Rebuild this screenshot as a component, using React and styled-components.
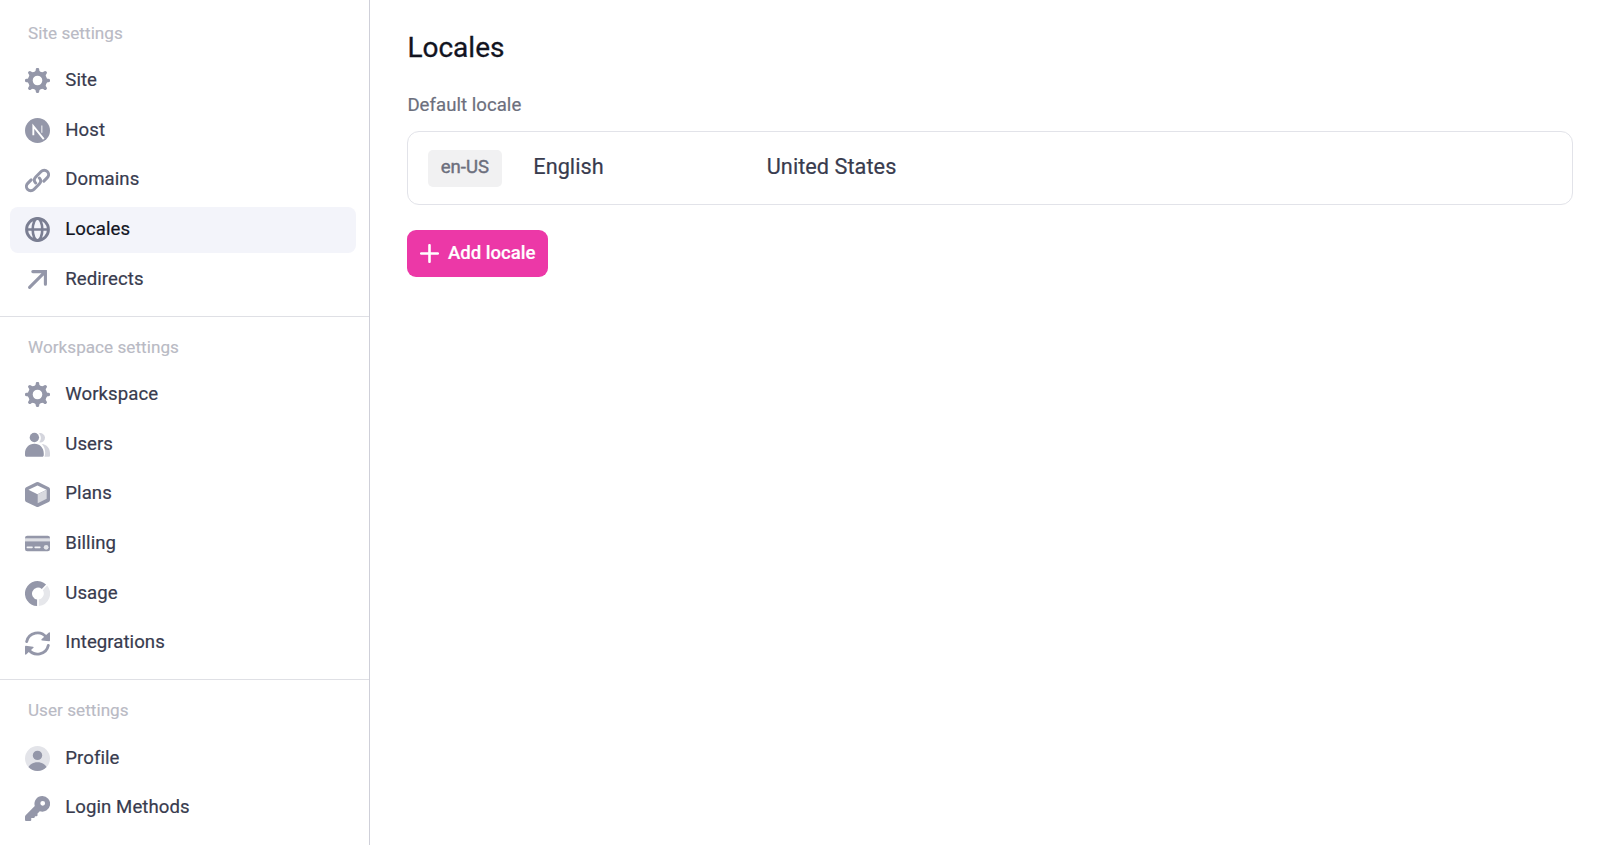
import React from "react";
import styled, { createGlobalStyle } from "styled-components";

const GlobalStyle = createGlobalStyle`
  *, *::before, *::after { box-sizing: border-box; }
  html, body, #root { height: 100%; }
  body {
    margin: 0;
    overflow: hidden;
    background: #fff;
    color: #383b4e;
    font-family: Roboto, "Liberation Sans", sans-serif;
    -webkit-font-smoothing: antialiased;
  }
`;

const Layout = styled.div`
  display: flex;
  height: 845px;
`;

const Sidebar = styled.nav`
  display: flex;
  flex-direction: column;
  flex: 0 0 370px;
  padding-top: 2.7px;
  border-right: 1px solid #cfd0d9;
  overflow: hidden;
`;

const Section = styled.section`
  flex: none;
  padding: 0 13.5px 13.3px 9.5px;

  & + & {
    border-top: 1px solid #dfe0e5;
  }
`;

const SectionLabel = styled.h2`
  margin: 0;
  height: 55px;
  padding: 20px 0 0 18.5px;
  font-size: 17.1px;
  font-weight: 400;
  line-height: 21px;
  letter-spacing: 0.04px;
  color: #b9bac4;
  -webkit-text-stroke: 0.15px currentColor;
`;

const NavList = styled.ul`
  display: flex;
  flex-direction: column;
  gap: 3.68px;
  margin: 0;
  padding: 0;
  list-style: none;
`;

const NavItem = styled.li`
  display: flex;
  align-items: center;
  gap: 15.3px;
  height: 46px;
  padding: 0 15.5px;
  border-radius: 8px;
  font-size: 18.6px;
  line-height: 24px;
  letter-spacing: 0.06px;
  color: ${(p) => (p.$active ? "#12141f" : "#383b4e")};
  background: ${(p) => (p.$active ? "#f3f4fa" : "transparent")};

  svg {
    flex: none;
    color: ${(p) => (p.$active ? "#7a7e92" : "#9497a9")};
  }
`;

const NavText = styled.span`
  padding-bottom: 1.4px;
  white-space: nowrap;
  -webkit-text-stroke: 0.2px currentColor;
`;

const Main = styled.main`
  display: flex;
  flex: 1;
  flex-direction: column;
  align-items: flex-start;
  padding: 31px 27px 0 37.4px;
`;

const Title = styled.h1`
  margin: 0;
  font-size: 28px;
  font-weight: 400;
  line-height: 33px;
  color: #12141f;
  -webkit-text-stroke: 0.3px currentColor;
`;

const FieldLabel = styled.div`
  margin: 29px 0 14px;
  font-size: 18.6px;
  line-height: 24px;
  letter-spacing: 0.03px;
  color: #6c6f7d;
  -webkit-text-stroke: 0.2px currentColor;
`;

const LocaleCard = styled.div`
  display: flex;
  align-items: center;
  width: 100%;
  height: 74px;
  padding: 0 19.2px;
  border: 1px solid #e2e3e9;
  border-radius: 12px;
`;

const LocaleCode = styled.span`
  display: flex;
  align-items: center;
  justify-content: center;
  width: 74.5px;
  height: 37px;
  margin-right: 31.2px;
  padding-bottom: 2px;
  border-radius: 5px;
  background: #f1f1f2;
  font-size: 18.6px;
  color: #6c6f7d;
  -webkit-text-stroke: 0.4px currentColor;
`;

const LocaleText = styled.span`
  width: ${(p) => p.$width || "auto"};
  padding-bottom: 2px;
  font-size: 21.7px;
  line-height: 28px;
  letter-spacing: 0.04px;
  color: #383b4e;
  -webkit-text-stroke: 0.2px currentColor;
`;

const AddButton = styled.button`
  display: flex;
  align-items: center;
  gap: 9px;
  height: 47px;
  margin-top: 25px;
  padding: 0 12.5px;
  border: 0;
  border-radius: 9px;
  background: #ec38a7;
  color: #fff;
  font: 500 18.6px/24px Roboto, sans-serif;
`;

const ButtonLabel = styled.span`
  padding-bottom: 2px;
  -webkit-text-stroke: 0.2px currentColor;
`;

const Icon = ({ children }) => (
  <svg width="25" height="25" viewBox="0 0 24 24" fill="currentColor" aria-hidden="true">
    {children}
  </svg>
);

const GearIcon = () => (
  <Icon>
    <path
      fillRule="evenodd"
      d="M12 3a9 9 0 1 0 0 18a9 9 0 0 0 0-18zM12 7.400a4.600 4.600 0 1 1 0 9.200a4.600 4.600 0 0 1 0-9.200z"
    />
    {[0, 45, 90, 135, 180, 225, 270, 315].map((a) => (
      <path
        key={a}
        transform={`rotate(${a} 12 12)`}
        d="M8.300 4C9.900 3.500 10.300 2.700 10.300 1.600a1.700 1.700 0 0 1 3.400 0C13.700 2.700 14.100 3.500 15.700 4L14 6h-4z"
      />
    ))}
  </Icon>
);

const HostIcon = () => (
  <Icon>
    <circle cx="12" cy="12" r="12" />
    <path d="M8 16.600V7.800L18 20.300" fill="none" stroke="#fff" strokeWidth="1.800" />
    <path d="M16.100 7.200v7" stroke="#fff" strokeOpacity="0.6" strokeWidth="1.500" />
  </Icon>
);

const LinkIcon = () => (
  <Icon>
    <g fill="none" stroke="currentColor" strokeWidth="2.900" strokeLinecap="round">
      <path d="M10.200 14.400c-1.900-1.900-1.700-4 .1-5.800l5.200-5.200a4.150 4.150 0 0 1 5.900 5.900l-3.300 3.300" />
      <path d="M13.800 9.600c1.900 1.900 1.700 4-.1 5.800l-5.200 5.200a4.150 4.150 0 0 1-5.900-5.900l3.300-3.300" />
    </g>
  </Icon>
);

const GlobeIcon = () => (
  <Icon>
    <g fill="none" stroke="currentColor" strokeWidth="2.800">
      <circle cx="12" cy="12" r="10.500" />
      <ellipse cx="12" cy="12" rx="4.600" ry="10.500" strokeWidth="2.500" />
      <path d="M1.300 12h21.400" strokeWidth="2.400" />
    </g>
  </Icon>
);

const ArrowIcon = () => (
  <Icon>
    <path
      d="M7.500 4.400H19.600V16.500M19 5L4.400 19.600"
      fill="none"
      stroke="currentColor"
      strokeWidth="3"
      strokeLinecap="round"
      strokeLinejoin="miter"
    />
  </Icon>
);

const UsersIcon = () => (
  <Icon>
    <path
      opacity="0.4"
      d="M13.200 1.300a4.500 4.500 0 1 1 .4 8.600c2.300-2.500 2.200-6-.4-8.600zM16.200 11.400c4.700.6 7.800 4 7.800 9v2.300a1 1 0 0 1-1 1h-4.200c1.200-4.500.5-9-2.600-12.300z"
    />
    <circle cx="9" cy="5.300" r="4.500" />
    <path d="M9 11.200c5.300 0 9 3.900 9 9.200v1.800c0 .8-.7 1.500-1.500 1.500h-15C.7 23.700 0 23 0 22.200v-1.800c0-5.300 3.700-9.200 9-9.200z" />
  </Icon>
);

const BoxIcon = () => (
  <Icon>
    <path d="M10.900.3a2.400 2.400 0 0 1 2.200 0l9.700 4.700A2.200 2.200 0 0 1 24 7v10.200a2.200 2.200 0 0 1-1.200 1.900l-9.700 4.700a2.400 2.400 0 0 1-2.200 0l-9.700-4.700A2.200 2.200 0 0 1 0 17.200V7a2.200 2.200 0 0 1 1.200-2z" />
    <path fill="#fff" d="M12 3.300l8.700 4.100-8.700 4.300-8.700-4.300z" />
    <path fill="#d8d9df" d="M12.200 11.700l8.600-4.200v8.600l-8.600 4.300z" />
  </Icon>
);

const CardIcon = () => (
  <Icon>
    <rect y="4.500" width="24" height="15" rx="2.200" />
    <path fill="#dfe0e5" d="M0 7h24v3H0z" />
    <path d="M2.200 15.700h4.600M9.700 15.700h4.600" stroke="#f3f4f6" strokeWidth="1.500" strokeLinecap="round" />
    <circle cx="20.300" cy="15.700" r="2.300" fill="#e5e6ea" />
  </Icon>
);

const UsageIcon = () => (
  <Icon>
    <path d="M11.600 24A12 12 0 1 1 20.200 3.300L16.100 7.700A5.700 5.700 0 1 0 11.600 17.700z" />
    <path fill="#e6e7eb" d="M21.200 4.300A12 12 0 0 1 13.300 24v-6.400A5.700 5.700 0 0 0 17.100 8.800z" />
  </Icon>
);

const SyncIcon = () => (
  <Icon>
    <g fill="none" stroke="currentColor" strokeWidth="2.700" strokeLinecap="round">
      <path d="M1.600 10.200A10.600 10.600 0 0 1 20.600 6.300" />
      <path d="M22.400 13.800A10.600 10.600 0 0 1 3.400 17.700" />
    </g>
    <path d="M23.400 1.300a.6.600 0 0 1 .6.600v7.100c0 .5-.4.800-.8.800l-6.900-.8c-.6-.1-.8-.700-.4-1.100l7-6.400z" />
    <path d="M.6 22.700a.6.600 0 0 1-.6-.6V15c0-.5.4-.8.800-.8l6.900.8c.6.100.8.700.4 1.100l-7 6.400z" />
  </Icon>
);

const ProfileIcon = () => (
  <Icon>
    <circle cx="12" cy="12" r="12" fill="#e3e4e9" />
    <circle cx="12" cy="9" r="4.500" />
    <path d="M3.300 20.200c1.500-3 5-4.700 8.700-4.700s7.200 1.700 8.700 4.700A12 12 0 0 1 3.300 20.200z" />
  </Icon>
);

const KeyIcon = () => (
  <Icon>
    <path
      fillRule="evenodd"
      d="M16.500 0a7.500 7.500 0 1 1-2.300 14.600L12 16.800V18.500a1 1 0 0 1-1 1H9.500v.5a1 1 0 0 1-1 1H6V23a1 1 0 0 1-1 1H1a1 1 0 0 1-1-1v-3.200a2 2 0 0 1 .6-1.400l8.800-8.700A7.500 7.500 0 0 1 16.500 0zM17 4.700a2.300 2.300 0 1 0 0 4.600a2.300 2.300 0 0 0 0-4.600z"
    />
  </Icon>
);

const PlusIcon = () => (
  <svg width="19" height="19" viewBox="0 0 19 19" aria-hidden="true">
    <path d="M9.500 1.200v16.600M1.200 9.500h16.600" stroke="#fff" strokeWidth="2.600" strokeLinecap="round" />
  </svg>
);

const sections = [
  {
    label: "Site settings",
    items: [
      ["Site", GearIcon],
      ["Host", HostIcon],
      ["Domains", LinkIcon],
      ["Locales", GlobeIcon],
      ["Redirects", ArrowIcon],
    ],
  },
  {
    label: "Workspace settings",
    items: [
      ["Workspace", GearIcon],
      ["Users", UsersIcon],
      ["Plans", BoxIcon],
      ["Billing", CardIcon],
      ["Usage", UsageIcon],
      ["Integrations", SyncIcon],
    ],
  },
  {
    label: "User settings",
    items: [
      ["Profile", ProfileIcon],
      ["Login Methods", KeyIcon],
    ],
  },
];

export default function App() {
  return (
    <>
      <GlobalStyle />
      <Layout>
        <Sidebar>
          {sections.map((section) => (
            <Section key={section.label}>
              <SectionLabel>{section.label}</SectionLabel>
              <NavList>
                {section.items.map(([name, Glyph]) => (
                  <NavItem key={name} $active={name === "Locales"}>
                    <Glyph />
                    <NavText>{name}</NavText>
                  </NavItem>
                ))}
              </NavList>
            </Section>
          ))}
        </Sidebar>
        <Main>
          <Title>Locales</Title>
          <FieldLabel>Default locale</FieldLabel>
          <LocaleCard>
            <LocaleCode>en-US</LocaleCode>
            <LocaleText $width="233.5px">English</LocaleText>
            <LocaleText>United States</LocaleText>
          </LocaleCard>
          <AddButton type="button">
            <PlusIcon />
            <ButtonLabel>Add locale</ButtonLabel>
          </AddButton>
        </Main>
      </Layout>
    </>
  );
}
